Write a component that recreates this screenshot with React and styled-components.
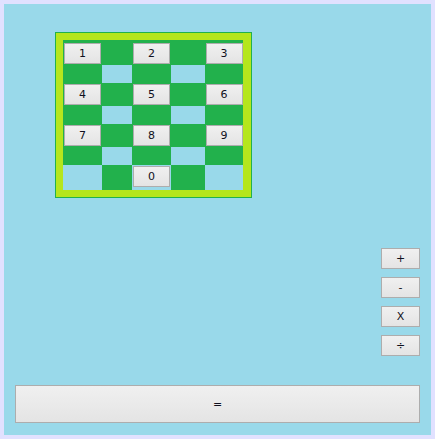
import React from 'react';
import styled, { createGlobalStyle } from 'styled-components';

const GlobalStyle = createGlobalStyle`
  html, body {
    margin: 0;
    padding: 0;
    background: #e1e1ff;
  }
  body {
    font-family: "DejaVu Sans", "Liberation Sans", sans-serif;
  }
`;

// cells that show the light blue through the green board (row, col), 1-based
const blueCells = [
  [2, 2], [2, 4],
  [4, 2], [4, 4],
  [6, 2], [6, 4],
  [7, 1], [7, 3], [7, 5],
];

const digits = [
  { label: '1', row: 1, col: 1, align: 'end' },
  { label: '2', row: 1, col: 3, align: 'end' },
  { label: '3', row: 1, col: 5, align: 'end' },
  { label: '4', row: 3, col: 1, align: 'center' },
  { label: '5', row: 3, col: 3, align: 'center' },
  { label: '6', row: 3, col: 5, align: 'center' },
  { label: '7', row: 5, col: 1, align: 'center' },
  { label: '8', row: 5, col: 3, align: 'center' },
  { label: '9', row: 5, col: 5, align: 'center' },
  { label: '0', row: 7, col: 3, align: 'start' },
];

const ops = ['+', '-', 'X', '÷'];

function App() {
  return (
    <>
      <GlobalStyle />
      <Frame>
        <Window>
          <Board>
            <Grid>
              {blueCells.map(([r, c]) => (
                <Hole key={`${r}-${c}`} $row={r} $col={c} />
              ))}
              {digits.map((d) => (
                <DigitKey key={d.label} $row={d.row} $col={d.col} $align={d.align}>
                  {d.label}
                </DigitKey>
              ))}
            </Grid>
          </Board>

          <Ops>
            {ops.map((o) => (
              <OpKey key={o}>{o}</OpKey>
            ))}
          </Ops>

          <EqualsKey>=</EqualsKey>
        </Window>
      </Frame>
    </>
  );
}

export default App;

const Frame = styled.div`
  width: 435px;
  height: 439px;
  padding: 4px;
  box-sizing: border-box;
  background: #e1e1ff;
`;

const Window = styled.div`
  height: 100%;
  box-sizing: border-box;
  background: #99d9ea;
  display: flex;
  flex-direction: column;
  padding: 28px 11px 12px 11px;
`;

const Board = styled.div`
  align-self: flex-start;
  margin-left: 40px;
  border: 1px solid #22b14c;
  background: #b5e61d;
  padding: 7px 8px 7px 7px;
`;

const Grid = styled.div`
  display: grid;
  grid-template-columns: 39px 30px 39px 34px 38px;
  grid-template-rows: 25px 18px 23px 18px 23px 18px 25px;
  background: #22b14c;
`;

const Hole = styled.div`
  grid-row: ${(p) => p.$row};
  grid-column: ${(p) => p.$col};
  background: #99d9ea;
`;

const Key = styled.button`
  box-sizing: border-box;
  border: 1px solid #adadad;
  border-radius: 0;
  background: linear-gradient(#f0f0f0, #e4e4e4);
  font-family: "DejaVu Sans", "Liberation Sans", sans-serif;
  font-size: 11px;
  color: #101020;
  padding: 0;
  margin: 0;
  display: flex;
  align-items: center;
  justify-content: center;
`;

const DigitKey = styled(Key)`
  grid-row: ${(p) => p.$row};
  grid-column: ${(p) => p.$col};
  align-self: ${(p) => p.$align};
  justify-self: center;
  width: 37px;
  height: 21px;
  margin: ${(p) => (p.$align === 'end' ? '0 0 1px' : p.$align === 'start' ? '1px 0 0' : '0')};
`;

const Ops = styled.div`
  display: flex;
  flex-direction: column;
  align-items: flex-end;
  gap: 8px;
  margin-top: 50px;
`;

const OpKey = styled(Key)`
  width: 39px;
  height: 21px;
`;

const EqualsKey = styled(Key)`
  margin-top: auto;
  width: 100%;
  height: 38px;
`;
